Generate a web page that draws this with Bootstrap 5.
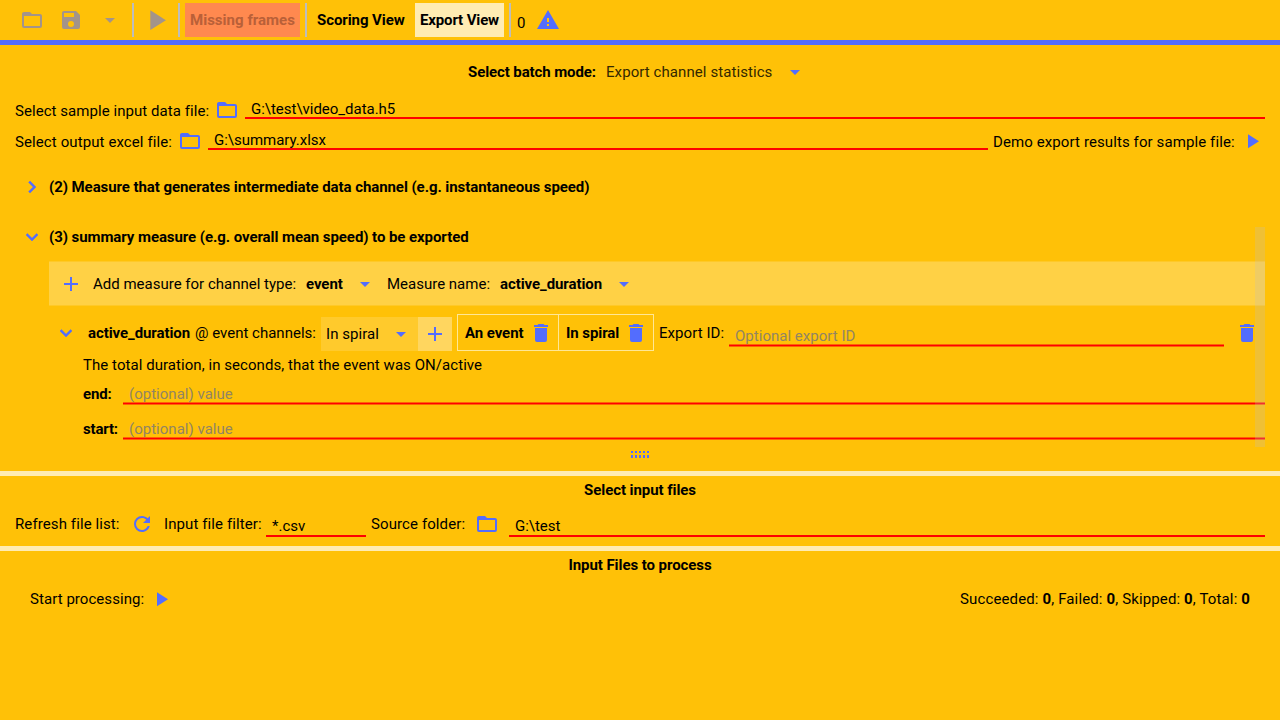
<!DOCTYPE html>
<html lang="en">
<head>
<meta charset="utf-8">
<meta name="viewport" content="width=device-width, initial-scale=1">
<title>Export View</title>
<link href="https://cdn.jsdelivr.net/npm/bootstrap@5.3.0/dist/css/bootstrap.min.css" rel="stylesheet">
<script src="https://cdn.jsdelivr.net/npm/bootstrap@5.3.0/dist/js/bootstrap.bundle.min.js"></script>
<style>
  :root { --amber: #ffc107; --pale: #ffecb3; --accent: #536dfe; --line: #f00; --line-soft: #ff6104; }
  body { font: 15px/20px Roboto, sans-serif; letter-spacing: .055px; color: #000; background: var(--amber); height: 720px; overflow: hidden; }
  b, .fw-bold { font-weight: 700; letter-spacing: -.075px; }
  .loose { letter-spacing: .1px; }
  .tight { letter-spacing: 0; }
  .ico { width: 24px; height: 24px; fill: var(--accent); display: block; flex: none; }
  .ico.heavy { stroke: var(--accent); stroke-width: .5; }
  span, b { white-space: nowrap; }
  button { border: 0; padding: 0; background: none; display: block; color: inherit; }

  .toolbar { height: 45px; border-bottom: 5px solid var(--accent); padding-left: 20px; grid-template-columns: 39px 39px 34px 6.6px 39.4px 7px 115px 5px 2px 10px 98px 89px 5px 8px 19px 24px; }
  .toolbar .ico.off { fill: #a3948a; }
  .toolbar .run { width: 34px; height: 34px; }
  .sep { width: 2px; height: 34px; background: #bdbdbd; }
  .tool { height: 34px; line-height: 34px; text-align: center; }
  .missing { background: #ff894f; color: #b96038; letter-spacing: .026px; }
  .active-view { background: var(--pale); letter-spacing: -.14px; }
  .count { margin-top: 6px; }

  .batch { height: 51px; padding: 3px 0 0 468px; grid-template-columns: 138px 176.5px 24px; }
  .batch b { letter-spacing: -.1px; }
  .batch span { color: #332801; letter-spacing: .08px; }
  .file-row { height: 30px; margin: 0 15px; }
  .file-row > .ico { margin-top: -2px; }
  .sample { grid-template-columns: 200px 30px 1fr; }
  .output { grid-template-columns: 163px 30px 780px 5px 247px 25px; margin-top: 1px; }

  .field { width: 100%; height: 18px; margin-top: 5px; padding: 0 6px; line-height: 16px; border: 0; border-bottom: 2px solid var(--line); border-radius: 0; background: none; align-self: start; color: #000; outline: 0; letter-spacing: -.02px; }
  .field::placeholder { color: #928563; opacity: 1; letter-spacing: .02px; }
  .field.soft { height: 20px; border: 0; padding-bottom: 3px; background: linear-gradient(var(--line-soft) 0 1px, var(--line) 1px 2px, var(--line-soft) 2px) bottom / 100% 3px no-repeat; }

  .measures { padding-top: 5px; }
  .fold { height: 50px; padding-left: 20px; grid-template-columns: 29px 1fr; }
  .add-bar { height: 45px; margin: -1px 15px 0 49px; padding-left: 10px; grid-template-columns: 34px 213px 47px 34px 113px 112px 24px; background: linear-gradient(#ffc927 0 1px, #ffd145 1px 44px, #ffc927 44px); }
  .measure { height: 37px; margin: 8px 15px 0 54px; grid-template-columns: 34px 107px 126px 97px 34px 5px 197px 5px 70px 495px 11px 24px; }
  .picker { height: 34px; margin-top: 2px; padding: 0 5px; background: #ffca2c; }
  .plus-cell { height: 34px; margin-top: 2px; background: #ffd65f; }
  .chips { height: 37px; border: 1px solid #ffe796; }
  .chip-item { padding-left: 7px; width: 100px; }
  .chip-item .ico { margin-left: 6px; }
  .chip-item + .chip-item { border-left: 1px solid #ffe796; width: 95px; }
  .chip-item + .chip-item .ico { margin-left: 5px; }
  .desc { margin: 4px 0 1px 83px; }
  .option { margin: 0 15px 0 83px; height: 35px; grid-template-columns: 40px 1fr; }
  .option b { letter-spacing: -.18px; }
  .option .field { margin-top: 9px; }
  .scroller { right: 15px; top: 70px; width: 10px; height: 220px; background: rgba(192,192,192,.25); }
  .grip { width: 18px; height: 7px; margin: 5px auto 13px; }
  .dots { display: block; fill: var(--accent); }
  .panel-split { border-top: 5px solid var(--pale); }
  .inputs-panel { height: 75px; }
  .panel-title { padding-top: 4px; text-align: center; letter-spacing: -.07px; }
  .source { margin: 9px 15px 0; height: 30px; grid-template-columns: 115px 34px 102px 100px 5px 104px 34px 1fr; }
  .source .field { height: 19px; margin-top: 9px; padding-bottom: 1px; }
  .process { margin: 9px 30px 0; height: 30px; }
  .process .ico { margin-left: 5px; }
  .totals, .totals b { letter-spacing: .13px; }
</style>
</head>
<body>
<svg class="d-none">
  <symbol id="folder" viewBox="0 0 24 24"><path d="M20,18H4V8H20M20,6H12L10,4H4C2.89,4 2,4.89 2,6V18A2,2 0 0,0 4,20H20A2,2 0 0,0 22,18V8C22,6.89 21.1,6 20,6Z"/></symbol>
  <symbol id="save" viewBox="0 0 24 24"><path d="M15,9H5V5H15M12,19A3,3 0 0,1 9,16A3,3 0 0,1 12,13A3,3 0 0,1 15,16A3,3 0 0,1 12,19M17,3H5C3.89,3 3,3.9 3,5V19A2,2 0 0,0 5,21H19A2,2 0 0,0 21,19V7L17,3Z"/></symbol>
  <symbol id="caret" viewBox="0 0 24 24"><path d="M7,10L12,15L17,10H7Z"/></symbol>
  <symbol id="play" viewBox="0 0 24 24"><path d="M8,5.14V19.14L19,12.14L8,5.14Z"/></symbol>
  <symbol id="alert" viewBox="0 0 24 24"><path d="M13,14H11V10H13M13,18H11V16H13M1,21H23L12,2L1,21Z"/></symbol>
  <symbol id="right" viewBox="0 0 24 24"><path d="M8.59,16.58L13.17,12L8.59,7.41L10,6L16,12L10,18L8.59,16.58Z"/></symbol>
  <symbol id="down" viewBox="0 0 24 24"><path d="M7.41,8.58L12,13.17L16.59,8.58L18,10L12,16L6,10L7.41,8.58Z"/></symbol>
  <symbol id="plus" viewBox="0 0 24 24"><path d="M19,13H13V19H11V13H5V11H11V5H13V11H19V13Z"/></symbol>
  <symbol id="trash" viewBox="0 0 24 24"><path d="M19,4H15.5L14.5,3H9.5L8.5,4H5V6H19M6,19A2,2 0 0,0 8,21H16A2,2 0 0,0 18,19V7H6V19Z"/></symbol>
  <symbol id="refresh" viewBox="0 0 24 24"><path d="M17.65,6.35C16.2,4.9 14.21,4 12,4A8,8 0 0,0 4,12A8,8 0 0,0 12,20C15.73,20 18.84,17.45 19.73,14H17.65C16.83,16.33 14.61,18 12,18A6,6 0 0,1 6,12A6,6 0 0,1 12,6C13.66,6 15.14,6.69 16.22,7.78L13,11H20V4L17.65,6.35Z"/></symbol>
</svg>

<header class="toolbar d-grid align-items-center">
  <svg class="ico off"><use href="#folder"/></svg>
  <svg class="ico off"><use href="#save"/></svg>
  <svg class="ico off"><use href="#caret"/></svg>
  <i class="sep"></i>
  <svg class="ico off run"><use href="#play"/></svg>
  <i class="sep"></i>
  <button class="tool missing fw-bold">Missing frames</button>
  <i></i>
  <i class="sep"></i>
  <i></i>
  <button class="tool fw-bold text-start">Scoring View</button>
  <button class="tool active-view fw-bold">Export View</button>
  <i></i>
  <i class="sep"></i>
  <span class="count">0</span>
  <svg class="ico"><use href="#alert"/></svg>
</header>

<main>
  <div class="batch d-grid align-items-center">
    <b>Select batch mode:</b>
    <span>Export channel statistics</span>
    <svg class="ico"><use href="#caret"/></svg>
  </div>
  <div class="file-row sample d-grid align-items-center">
    <span>Select sample input data file:</span>
    <svg class="ico"><use href="#folder"/></svg>
    <input class="field" value="G:\test\video_data.h5">
  </div>
  <div class="file-row output d-grid align-items-center">
    <span class="loose">Select output excel file:</span>
    <svg class="ico"><use href="#folder"/></svg>
    <input class="field" value="G:\summary.xlsx">
    <i></i>
    <span class="loose">Demo export results for sample file:</span>
    <svg class="ico"><use href="#play"/></svg>
  </div>

  <section class="measures position-relative">
    <div class="fold d-grid align-items-center">
      <svg class="ico heavy"><use href="#right"/></svg>
      <b>(2) Measure that generates intermediate data channel (e.g. instantaneous speed)</b>
    </div>
    <div class="fold d-grid align-items-center">
      <svg class="ico heavy"><use href="#down"/></svg>
      <b>(3) summary measure (e.g. overall mean speed) to be exported</b>
    </div>
    <div class="add-bar d-grid align-items-center">
      <svg class="ico"><use href="#plus"/></svg>
      <span class="tight">Add measure for channel type:</span>
      <b>event</b>
      <svg class="ico"><use href="#caret"/></svg>
      <span class="tight">Measure name:</span>
      <b>active_duration</b>
      <svg class="ico"><use href="#caret"/></svg>
    </div>
    <div class="measure d-grid align-items-center">
      <svg class="ico heavy"><use href="#down"/></svg>
      <b>active_duration</b>
      <span class="tight">@ event channels:</span>
      <div class="picker d-flex align-items-center justify-content-between"><span>In spiral</span><svg class="ico"><use href="#caret"/></svg></div>
      <div class="plus-cell d-flex align-items-center justify-content-center"><svg class="ico"><use href="#plus"/></svg></div>
      <i></i>
      <div class="chips d-flex">
        <div class="chip-item d-flex align-items-center"><b>An event</b><svg class="ico"><use href="#trash"/></svg></div>
        <div class="chip-item d-flex align-items-center"><b>In spiral</b><svg class="ico"><use href="#trash"/></svg></div>
      </div>
      <i></i>
      <span>Export ID:</span>
      <input class="field soft align-self-end mb-1" placeholder="Optional export ID">
      <i></i>
      <svg class="ico"><use href="#trash"/></svg>
    </div>
    <div class="desc"><span>The total duration, in seconds, that the event was ON/active</span></div>
    <div class="option d-grid align-items-center">
      <b>end:</b><input class="field soft" placeholder="(optional) value">
    </div>
    <div class="option d-grid align-items-center">
      <b>start:</b><input class="field soft" placeholder="(optional) value">
    </div>
    <div class="scroller position-absolute"></div>
  </section>
  <div class="grip">
    <svg class="dots" width="18" height="7"><path d="M0 0h2v2H0zM4 0h2v2H4zM8 0h2v2H8zM12 0h2v2h-2zM16 0h2v2h-2zM0 4h2v3H0zM4 4h2v3H4zM8 4h2v3H8zM12 4h2v3h-2zM16 4h2v3h-2z"/></svg>
  </div>
</main>

<section class="panel-split inputs-panel">
  <div class="panel-title fw-bold">Select input files</div>
  <div class="source d-grid align-items-center">
    <span class="loose">Refresh file list:</span>
    <svg class="ico"><use href="#refresh"/></svg>
    <span class="loose">Input file filter:</span>
    <input class="field" value="*.csv">
    <i></i>
    <span class="loose">Source folder:</span>
    <svg class="ico"><use href="#folder"/></svg>
    <input class="field" value="G:\test">
  </div>
</section>

<section class="panel-split">
  <div class="panel-title fw-bold">Input Files to process</div>
  <div class="process d-flex align-items-center">
    <span>Start processing:</span>
    <svg class="ico"><use href="#play"/></svg>
    <span class="totals ms-auto">Succeeded: <b>0</b>, Failed: <b>0</b>, Skipped: <b>0</b>, Total: <b>0</b></span>
  </div>
</section>
</body>
</html>
